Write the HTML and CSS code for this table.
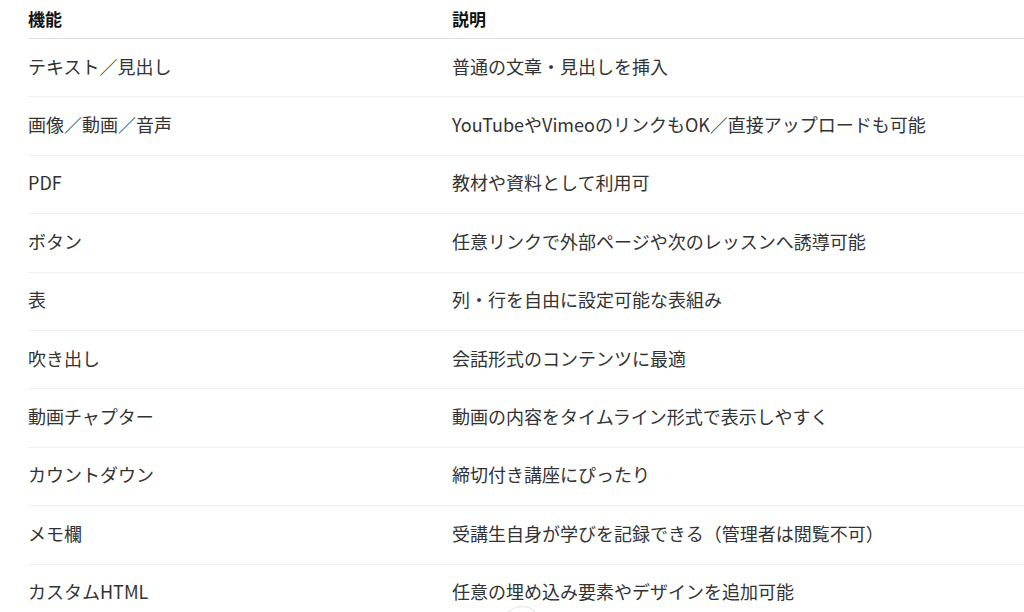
FILE: index.html
```html
<!DOCTYPE html>
<html lang="ja">
<head>
    <meta charset="UTF-8">
    <meta name="viewport" content="width=device-width, initial-scale=1.0">
    <title>機能一覧</title>
    <link rel="stylesheet" href="styles.css">
</head>
<body>
    <div class="wrap">
        <table class="features">
            <thead>
                <tr>
                    <th class="col-name">機能</th>
                    <th>説明</th>
                </tr>
            </thead>
            <tbody>
                <tr><td>テキスト／見出し</td><td>普通の文章・見出しを挿入</td></tr>
                <tr><td>画像／動画／音声</td><td>YouTubeやVimeoのリンクもOK／直接アップロードも可能</td></tr>
                <tr><td>PDF</td><td>教材や資料として利用可</td></tr>
                <tr><td>ボタン</td><td>任意リンクで外部ページや次のレッスンへ誘導可能</td></tr>
                <tr><td>表</td><td>列・行を自由に設定可能な表組み</td></tr>
                <tr><td>吹き出し</td><td>会話形式のコンテンツに最適</td></tr>
                <tr><td>動画チャプター</td><td>動画の内容をタイムライン形式で表示しやすく</td></tr>
                <tr><td>カウントダウン</td><td>締切付き講座にぴったり</td></tr>
                <tr><td>メモ欄</td><td>受講生自身が学びを記録できる（管理者は閲覧不可）</td></tr>
                <tr><td>カスタムHTML</td><td>任意の埋め込み要素やデザインを追加可能</td></tr>
            </tbody>
        </table>
    </div>
    <div class="scroll-btn"></div>
</body>
</html>
```

FILE: styles.css
```css
body {
    margin: 0;
    background: #fff;
    font-family: "Noto Sans CJK JP", "Noto Sans", sans-serif;
    color: #333;
    overflow: hidden;
}
.wrap {
    padding-left: 28px;
}
.features {
    width: 100%;
    border-collapse: collapse;
}
.features th {
    height: 36px;
    padding: 0 0 2px;
    text-align: left;
    vertical-align: middle;
    font-size: 17px;
    font-weight: 700;
    color: #111;
    border-bottom: 1px solid #dedede;
}
.features .col-name {
    width: 424px;
}
.features td {
    height: 53.4px;
    padding: 0 0 4px;
    vertical-align: middle;
    font-size: 18px;
    border-bottom: 1px solid #f1f1f1;
}
.scroll-btn {
    position: absolute;
    left: 502px;
    top: 606px;
    width: 38px;
    height: 38px;
    border: 1px solid #e4e4e4;
    border-radius: 50%;
    background: #fff;
}
```
